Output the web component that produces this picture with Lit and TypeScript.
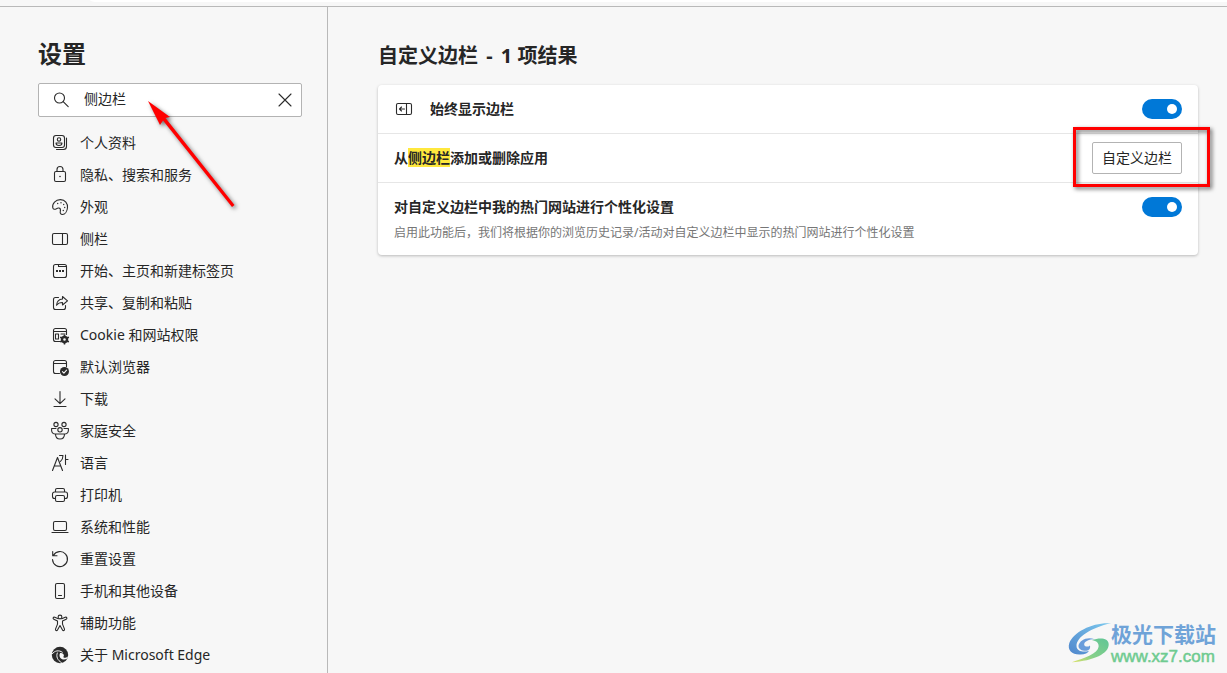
import { LitElement, html, css, svg } from "lit";
import { customElement, property, state } from "lit/decorators.js";

const icons: Record<string, unknown> = {
  profile: svg`<rect x="3.5" y="2.500" width="11" height="12" rx="2.500"/><circle cx="9" cy="6.500" r="1.700"/><path d="M6 10h6c0 1.700-1.200 2.500-3 2.500s-3-.8-3-2.500z"/><path d="M16.500 5v8.500a3 3 0 0 1-3 3h-7"/>`,
  lock: svg`<rect x="4.500" y="6.500" width="11" height="10" rx="1.500"/><path d="M7 6.500V4.500a3 3 0 0 1 6 0v2"/><circle cx="10" cy="11.500" r=".8" class="solid"/>`,
  palette: svg`<path d="M2.800 10.800C1.800 6.500 5.800 2.500 10.500 2.600c4.600.1 7.400 4 7 8.200-.4 3.700-2.500 6.700-5 6.700-2 0-2.600-1.500-2.200-3.200.4-1.700.3-2.800-1-3.200-1.100-.4-1.900-.1-2.900.6-1.600 1-3.100.8-3.600-.9z"/><g class="solid"><circle cx="7.700" cy="6.500" r=".7"/><circle cx="11" cy="5.700" r=".7"/><circle cx="13.700" cy="7.500" r=".7"/><circle cx="14.700" cy="10.500" r=".7"/><circle cx="13.300" cy="13.500" r=".7"/></g>`,
  sidebar: svg`<rect x="2.500" y="4.500" width="15" height="11" rx="1.500"/><path d="M12.500 4.500v11"/>`,
  start: svg`<rect x="3.500" y="3.500" width="13" height="13" rx="2"/><path d="M8.500 3.500v2h8"/><g class="solid"><rect x="6" y="9" width="2" height="2"/><rect x="9" y="9" width="2" height="2"/><rect x="12" y="9" width="2" height="2"/></g>`,
  share: svg`<path d="M8.500 4.500H5.500a2 2 0 0 0-2 2v8a2 2 0 0 0 2 2h8a2 2 0 0 0 2-2v-2"/><path d="M12.500 3.500l5 4.300-5 4.200V9.500c-2.800 0-4.600.8-6 2.700.3-3.700 2.300-5.900 6-6.200z"/>`,
  cookie: svg`<path d="M10 16.500H5.500a2 2 0 0 1-2-2v-9a2 2 0 0 1 2-2h9a2 2 0 0 1 2 2V9.500M3.500 6.500h13M5.500 9h3v5h-3zM11 9h4"/><circle cx="14.500" cy="14.500" r="2.500" stroke-width="2.400"/><path d="M14.500 10.300v1M14.500 17.700v1M10.900 12.400l1 .6M17.200 16l1 .6M10.900 16.600l1-.6M17.200 13l1-.6" stroke-width="1.800"/>`,
  browser: svg`<path d="M9.500 16.500h-4a2 2 0 0 1-2-2v-9a2 2 0 0 1 2-2h9a2 2 0 0 1 2 2v4M3.500 6.500h13"/><circle cx="14.500" cy="14.500" r="4.500" class="solid"/><path d="M12.400 14.600l1.500 1.500 2.700-2.900" class="light"/>`,
  download: svg`<path d="M10 2.500v12M5 9.800l5 4.900 5-4.900M4 17.500h12"/>`,
  family: svg`<circle cx="6" cy="3.500" r="2.100"/><circle cx="14" cy="3.500" r="2.100"/><circle cx="10" cy="8.800" r="2.200"/><path d="M6 7.500H1.600c-.3 3.300.8 5.300 3.400 5.500M14 7.500h4.400c.3 3.300-.8 5.300-3.400 5.500M5.500 13h9c0 3.300-1.700 5-4.500 5s-4.500-1.700-4.500-5z"/>`,
  language: svg`<path d="M2.500 17.500L7.500 4.500l5 13M4.300 13h6.400M9.500 2.500H13c0 2.500-.7 4.300-2.500 5.800M15.500 2v9.500M15.500 6.500H18"/>`,
  printer: svg`<path d="M5.500 13.500h-1a2 2 0 0 1-2-2V9a2 2 0 0 1 2-2h11a2 2 0 0 1 2 2v2.500a2 2 0 0 1-2 2h-1M5.500 7V5a1.500 1.500 0 0 1 1.500-1.500h6A1.500 1.500 0 0 1 14.500 5v2"/><rect x="5.500" y="10.500" width="9" height="6" rx="1.500"/>`,
  system: svg`<rect x="3.500" y="4.500" width="13" height="9" rx="1.500"/><path d="M2 15.500h16"/>`,
  reset: svg`<path d="M3.400 6.500a7.500 7.500 0 1 1-.9 4M2.700 2.500v4.200h4.300"/>`,
  phone: svg`<rect x="5.500" y="2.500" width="9" height="15" rx="1.500"/><path d="M8.500 14.500h3"/>`,
  access: svg`<circle cx="10" cy="4" r="1.900"/><path d="M8.300 5.700L4.800 4.200c-1.600-.5-2.300 1.300-1 2l3.700 1.900v3l-2 5c-.4 1.500 1.400 2 2 .8L10 12.500l2.500 4.400c.6 1.200 2.400.7 2-.8l-2-5v-3l3.700-1.900c1.300-.7.6-2.500-1-2l-3.500 1.500"/>`,
  edge: svg`<circle cx="10" cy="10" r="8.200" class="solid"/><path d="M2.300 8.800C4.500 5.500 9 4.800 12.300 7.200M7.300 8c-1.400 3.600.2 7.300 4 9.500" class="gap"/><path d="M10.200 8c1.800-.4 3.600.6 3.700 2.300 0 .9-.6 1.400-.4 2 .4.900 2.600.6 4.500-.8l-.6 2c-2.600 1.500-5.800 1.200-7.200-.8-1-1.600-.9-3.400 0-4.700z" class="pale"/>`,
  pane: svg`<rect x="2.500" y="4.500" width="15" height="11" rx="1.500"/><path d="M12.500 4.500v11M5.500 10h5M7.500 8L5.500 10l2 2"/>`,
  search: svg`<circle cx="8.500" cy="8" r="5"/><path d="M12.200 11.700l5 5"/>`,
  close: svg`<path d="M4 4l12 12M16 4L4 16"/>`,
};

@customElement("line-icon")
class LineIcon extends LitElement {
  @property() name = "";
  static styles = css`
    :host { display: block; flex: none; width: 20px; height: 20px; }
    svg { display: block; fill: none; stroke: #2b2b2b; stroke-width: 1.1; stroke-linecap: round; stroke-linejoin: round; }
    .solid { fill: #2b2b2b; stroke: none; }
    .light { stroke: #f7f7f7; }
    .gap { stroke: #f7f7f7; stroke-width: 1; }
    .pale { fill: #f7f7f7; stroke: none; }
  `;
  render() {
    return html`<svg width="20" height="20" viewBox="0 0 20 20" aria-hidden="true">${icons[this.name]}</svg>`;
  }
}

const menu = [
  ["profile", "个人资料"],
  ["lock", "隐私、搜索和服务"],
  ["palette", "外观"],
  ["sidebar", "侧栏"],
  ["start", "开始、主页和新建标签页"],
  ["share", "共享、复制和粘贴"],
  ["cookie", "Cookie 和网站权限"],
  ["browser", "默认浏览器"],
  ["download", "下载"],
  ["family", "家庭安全"],
  ["language", "语言"],
  ["printer", "打印机"],
  ["system", "系统和性能"],
  ["reset", "重置设置"],
  ["phone", "手机和其他设备"],
  ["access", "辅助功能"],
  ["edge", "关于 Microsoft Edge"],
];

@customElement("app-root")
class AppRoot extends LitElement {
  @state() query = "侧边栏";

  static styles = css`
    :host {
      display: flex;
      flex-direction: column;
      height: 100vh;
      overflow: hidden;
      position: relative;
      background: #f7f7f7;
      color: #262626;
      font: 14px/20px "Noto Sans", "Noto Sans CJK SC", sans-serif;
    }
    * { box-sizing: border-box; }
    .toolbar { flex: none; height: 7px; padding-left: 90px; border-bottom: 1px solid #b9b9b9; }
    .address { height: 2px; background: #fff; border-bottom-left-radius: 8px 2px; }
    .page { flex: 1; display: flex; min-height: 0; }
    .side { position: relative; flex: none; width: 328px; padding: 31px 25px 0 38px; border-right: 1px solid #b9b9b9; }
    h1, h2 { margin: 0; font-weight: 700; }
    h1 { font-size: 24px; line-height: 32px; }
    h2 { font-size: 20px; line-height: 32px; }
    .dash { margin: 0 3px; }
    .search { display: flex; align-items: center; height: 34px; margin-top: 13px; padding: 0 6px 0 12px; background: #fff; border: 1px solid #b3b3b3; border-radius: 2px; }
    .search input { flex: 1; min-width: 0; height: 20px; margin: 0 0 2px 13px; padding: 0; border: 0; outline: 0; background: none; color: inherit; font: inherit; }
    .search button { display: flex; padding: 0; border: 0; background: none; }
    ul { list-style: none; margin: 10px 0 0; padding: 0 0 0 12px; }
    .link { display: flex; align-items: center; gap: 10px; height: 32px; color: inherit; text-decoration: none; white-space: nowrap; }
    .arrow { position: absolute; left: 140px; top: 84px; pointer-events: none; filter: drop-shadow(2px 2px 2px rgba(0, 0, 0, 0.55)); }
    main { flex: 1; min-width: 0; padding: 33px 29px 0 50px; }
    .card { margin-top: 13px; background: #fff; border-radius: 4px; box-shadow: 0 1px 3px rgba(0, 0, 0, 0.25); }
    .row { display: flex; align-items: flex-start; justify-content: space-between; padding: 14px 16px; }
    .row + .row { border-top: 1px solid #e6e6e6; }
    .row.action { padding: 8px 16px; align-items: center; }
    .row:last-child { padding-bottom: 12px; }
    .label { display: flex; align-items: center; gap: 16px; font-weight: 700; }
    .strong { font-weight: 700; }
    .hint { margin: 6px 0 0; font-size: 12px; line-height: 20px; color: #767676; }
    mark { background: #ffe83d; color: inherit; }
    .toggle { appearance: none; flex: none; width: 40px; height: 20px; margin: 0; border-radius: 10px; background: #ccc; display: flex; align-items: center; padding: 0 5px; }
    .toggle::before { content: ""; width: 10px; height: 10px; border-radius: 50%; background: #fff; }
    .toggle:checked { background: #0078d7; justify-content: flex-end; }
    .marked { position: relative; display: flex; }
    .marked::after { content: ""; position: absolute; inset: -15px -28px -13px -19px; border: 3px solid #f00; pointer-events: none; filter: drop-shadow(2px 2px 2px rgba(0, 0, 0, 0.6)); }
    .custom { height: 32px; padding: 0 9px; background: #fff; border: 1px solid #b3b3b3; border-radius: 2px; color: inherit; font: inherit; }
    .brand { position: absolute; right: 11px; bottom: 6px; display: flex; align-items: center; }
    .brand svg { display: block; margin-right: -2px; }
    .words { display: flex; flex-direction: column; color: #6fa3d8; font: 700 21px/28px "Noto Sans CJK SC", sans-serif; }
    .url { color: #6fcb90; font: 400 17px/20px "Liberation Sans", sans-serif; -webkit-text-stroke: 0.5px #6fcb90; }
  `;

  render() {
    return html`
      <div class="toolbar"><div class="address"></div></div>
      <div class="page">
        <nav class="side" aria-label="设置">
          <h1>设置</h1>
          <div class="search">
            <line-icon name="search"></line-icon>
            <input type="text" aria-label="搜索设置" .value=${this.query}
              @input=${(e: Event) => (this.query = (e.target as HTMLInputElement).value)} />
            <button type="button" aria-label="清除" @click=${() => (this.query = "")}><line-icon name="close"></line-icon></button>
          </div>
          <ul>
            ${menu.map(([icon, text]) => html`<li><a class="link" href="#${icon}"><line-icon name=${icon}></line-icon>${text}</a></li>`)}
          </ul>
          <svg class="arrow" width="110" height="130" viewBox="0 0 110 130" aria-hidden="true">
            <path d="M8 10L30 26L25.500 27L94.500 114L92 116L23 29.500L20 34Z" fill="#f00"/>
          </svg>
        </nav>
        <main>
          <h2>自定义边栏 <span class="dash">-</span> 1 项结果</h2>
          <section class="card">
            <div class="row">
              <label class="label" for="always"><line-icon name="pane"></line-icon>始终显示边栏</label>
              <input class="toggle" id="always" type="checkbox" checked />
            </div>
            <div class="row action">
              <span class="strong">从<mark>侧边栏</mark>添加或删除应用</span>
              <span class="marked"><button class="custom" type="button">自定义边栏</button></span>
            </div>
            <div class="row">
              <div>
                <label class="strong" for="personal">对自定义边栏中我的热门网站进行个性化设置</label>
                <p class="hint">启用此功能后，我们将根据你的浏览历史记录/活动对自定义边栏中显示的热门网站进行个性化设置</p>
              </div>
              <input class="toggle" id="personal" type="checkbox" checked />
            </div>
          </section>
        </main>
      </div>
      <div class="brand">
        <svg width="48" height="48" viewBox="0 0 50 50" aria-hidden="true">
          <defs>
            <linearGradient id="sky" x1="1" y1="0" x2="0" y2="1"><stop offset="0" stop-color="#7cc9ee"/><stop offset="1" stop-color="#4f86cc"/></linearGradient>
            <linearGradient id="leaf" x1="1" y1="0" x2="0" y2="1"><stop offset="0" stop-color="#5fc596"/><stop offset=".6" stop-color="#86d08a"/><stop offset="1" stop-color="#dfe36a"/></linearGradient>
          </defs>
          <path d="M48 4.500C30 3 9 13 4.500 25 2 33 8 37.500 16 37c5 0 8-2 9-4-5 2-13 1-13-5C12 19 27 9 48 4.500z" fill="url(#sky)"/>
          <path d="M14 28c1-6 9-10 17-7-6 0-11 2-11 5.500 0 2.500 4 3 6 1 1 4-2 6-6 5.500-4-.5-6-2.500-6-5z" fill="#6a9ddb"/>
          <path d="M28 22c9-3 17-2 17.500 4C46 36 30 43.500 7 45c14-4 27-9 28-16 .4-4-2-6-7-7z" fill="url(#leaf)"/>
        </svg>
        <div class="words">极光下载站<span class="url">www.xz7.com</span></div>
      </div>
    `;
  }
}
